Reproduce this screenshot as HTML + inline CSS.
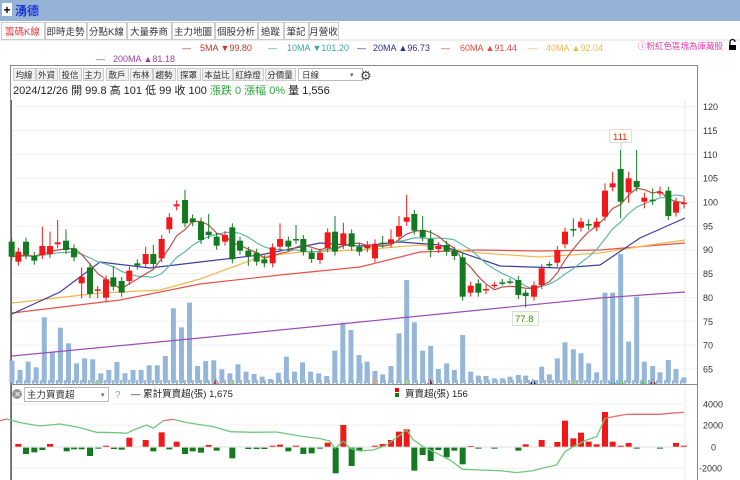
<!DOCTYPE html>
<html><head><meta charset="utf-8">
<style>
html,body{margin:0;padding:0;width:740px;height:480px;overflow:hidden;background:#fff;}
svg{display:block;font-family:"Liberation Sans","Noto Sans CJK TC",sans-serif;}
</style></head><body>
<svg id="s" width="740" height="480" viewBox="0 0 740 480" xmlns="http://www.w3.org/2000/svg">
<rect x="0" y="0" width="740" height="21" fill="#95b3d7"/>
<rect x="2" y="3" width="10" height="13" fill="#fff"/>
<text x="3.5" y="14" font-size="12" font-weight="bold" fill="#000">+</text>
<text x="15" y="15" font-size="12" font-weight="bold" fill="#1a35d8">湧德</text>
<line x1="0" y1="40" x2="740" y2="40" stroke="#ddd"/>
<g id="tabs" font-size="9.5"></g>
<g font-size="9">
<text x="182" y="51" fill="#b9373a">—</text><text x="200" y="51" fill="#c0392b">5MA ▼99.80</text>
<text x="268" y="51" fill="#3aa79a">—</text><text x="287" y="51" fill="#3aa79a">10MA ▼101.20</text>
<text x="357" y="51" fill="#2b2f8a">—</text><text x="373" y="51" fill="#2b2f8a">20MA ▲96.73</text>
<text x="441" y="51" fill="#e0483e">—</text><text x="460" y="51" fill="#e0483e">60MA ▲91.44</text>
<text x="528" y="51" fill="#f0b848">—</text><text x="546" y="51" fill="#f0b848">40MA ▲92.04</text>
<text x="96" y="62" fill="#9b3fa8">—</text><text x="113" y="62" fill="#9b3fa8">200MA ▲81.18</text>
<text x="638" y="49" fill="#e040b0" font-size="8.5">ⓘ粉紅色區塊為庫藏股</text>
</g>
<rect x="729" y="45" width="7" height="5" fill="#000"/><path d="M730 45 v-3 a2.5 2.5 0 0 1 5 0" fill="none" stroke="#000" stroke-width="1.2"/>
<rect x="10.5" y="65.5" width="687" height="420" fill="none" stroke="#888"/>
<line x1="11.5" y1="100" x2="11.5" y2="480" stroke="#666"/>
<line x1="685" y1="100" x2="685" y2="480" stroke="#e8e8e8"/>
<line x1="697.5" y1="100" x2="697.5" y2="480" stroke="#888"/>
<g id="tb" font-size="8.5"></g>
<text x="13" y="94" font-size="11" fill="#222">2024/12/26 開 99.8 高 101 低 99 收 100 <tspan fill="#2aa83a">漲跌 0 漲幅 0%</tspan> 量 1,556</text>
<g id="grid"></g>
<g id="chart"></g>
<rect x="12" y="380" width="673" height="4" fill="url(#st)"/>
<defs><pattern id="st" width="4" height="4" patternUnits="userSpaceOnUse"><rect width="2" height="4" fill="#9dbbdc"/></pattern></defs>
<line x1="11" y1="384.5" x2="697" y2="384.5" stroke="#888"/>
<circle cx="17" cy="394" r="5" fill="#999"/><text x="14.2" y="397" font-size="8" fill="#fff">✕</text>
<rect x="24.5" y="387.5" width="84" height="14" fill="#fff" stroke="#bbb"/>
<text x="27" y="398" font-size="9.5" fill="#333">主力買賣超</text><text x="101" y="397" font-size="7" fill="#666">▾</text>
<text x="115" y="398" font-size="10" fill="#7aa7d0">?</text>
<text x="131" y="397" font-size="9.5" fill="#222">— 累計買賣超(張) 1,675</text>
<rect x="395" y="388" width="4" height="4" fill="#e00"/><rect x="395" y="393" width="4" height="4" fill="#080"/>
<text x="405" y="397" font-size="9.5" fill="#222">買賣超(張) 156</text>
<g id="low"></g>
<g font-size="9" fill="#333" id="lab"></g>
</svg>
<script>
var NS="http://www.w3.org/2000/svg";
function el(p,t,a,txt){var e=document.createElementNS(NS,t);for(var k in a)e.setAttribute(k,a[k]);if(txt!=null)e.textContent=txt;document.getElementById(p).appendChild(e);return e;}
var tabs=[["籌碼K線",1,44],["即時走勢",45,86],["分點K線",87,126],["大量券商",127,171],["主力地圖",172,214],["個股分析",215,257],["追蹤",258,283],["筆記",284,308],["月營收",309,338]];
tabs.forEach(function(t,i){el("tabs","rect",{x:t[1]+.5,y:22.5,width:t[2]-t[1],height:17,fill:"#fff",stroke:"#ccc"});var w=t[2]-t[1];var tw=t[0].length*9.5-(t[0].indexOf("K")>=0?3:0);el("tabs","text",{x:t[1]+(w-tw)/2,y:35,fill:i==0?"#e0393e":"#333"},t[0]);});
var tb=[["均線",13,35],["外資",36,57],["投信",59,81],["主力",83,103],["散戶",106,128],["布林",130,152],["趨勢",153,175],["探罩",177,200],["本益比",202,232],["紅綠燈",233,263],["分價量",265,295]];
tb.forEach(function(t){el("tb","rect",{x:t[1]+.5,y:68.5,width:t[2]-t[1],height:12,fill:"#f0f0f0",stroke:"#ccc"});var w=t[2]-t[1];el("tb","text",{x:t[1]+(w-t[0].length*8.5)/2,y:78,fill:"#333"},t[0]);});
el("tb","rect",{x:298.5,y:68.5,width:64,height:12,fill:"#fff",stroke:"#bbb"});el("tb","text",{x:302,y:78,fill:"#333"},"日線");el("tb","text",{x:350,y:77,fill:"#666","font-size":7},"▾");
el("tb","text",{x:360,y:80,fill:"#444","font-size":13},"⚙");
function Y(p){return 202-(p-100)*4.77;}
[120,115,110,105,100,95,90,85,80,75,70,65].forEach(function(p){var y=Y(p);el("grid","line",{x1:12,x2:697,y1:y,y2:y,stroke:"#f0f0f0"});el("lab","text",{x:703,y:y+3.5},String(p));});
[["4000",404],["2000",425],["0",447],["-2000",468]].forEach(function(a){el("lab","text",{x:a[0]=="0"?711:(a[0][0]=="-"?699:703),y:a[1]+3.5},a[0]);el("grid","line",{x1:12,x2:685,y1:a[1],y2:a[1],stroke:a[0]=="0"?"#ddd":"#f2f2f2"});});
var vl=[542,570,545,562,412,515,443,490,550,535,538,580,570,546,580,570,570,556,556,528,385,442,368,558,543,541,568,580,553,575,582,590,597,578,530,575,547,575,580,588,512,428,450,525,545];
vl.forEach(function(v,i){var x=12+i*8.07,y=180+v/3;el("chart","rect",{x:x-2.5,y:y,width:5,height:383-y,fill:"#95b6d8"});});
var vr=[[0,700],[22,717],[45,723],[68,733],[93,708],[117,610],[140,450],[163,577],[188,662],[212,648],[235,717],[260,700],[283,720],[308,615],[332,725],[355,737],[378,738],[403,745],[427,745],[450,740],[475,735],[497,737],[522,750],[545,710],[568,733],[592,685],[615,637],[640,658],[663,670],[686,700],[710,727],[735,488],[758,488],[782,372],[806,635],[830,500],[853,695],[878,708],[900,727],[925,690],[948,717],[972,742]];
vr.forEach(function(v){var x=360+v[0]/3,y=130+v[1]/3;el("chart","rect",{x:x-2.5,y:y,width:5,height:383-y,fill:"#95b6d8"});});
function pl(pts,c){el("chart","polyline",{points:pts.map(function(p){return p.join(",")}).join(" "),fill:"none",stroke:c,"stroke-width":1.2});}
pl([[12,356],[200,338],[360,322],[480,310],[600,298],[685,292]],"#9b4fb8");
pl([[12,313],[120,300],[200,284],[280,275],[360,267],[420,252],[480,250],[540,251],[600,250],[660,245],[685,243]],"#e8514a");
pl([[12,303],[100,293],[160,290],[200,279],[260,257],[300,252],[360,250],[420,245],[480,253],[540,257],[600,253],[650,245],[685,240]],"#f2b84f");
pl([[12,314],[60,292],[100,262],[150,268],[200,262],[260,255],[320,243],[360,246],[400,242],[440,245],[500,266],[560,268],[600,265],[640,238],[685,218]],"#3b3fa0");
var c4=[[35,185,230,"g"],[55,215,245,"r"],[78,185,225,"g"],[103,228,242,"g"],[127,198,225,"r",140],[150,198,222,"r",155],[173,187,193,"r",120],[198,182,210,"g",148],[222,205,232,"g"],[245,290,310,"r",262,355],[270,262,342,"g"],[293,328,332,"r",318,355],[318,298,353,"r"],[340,292,320,"g",258],[365,303,338,"g"],[388,272,303,"r"],[412,250,257,"g"],[437,222,252,"r",200],[460,222,252,"g",195],[485,177,235,"r"],[508,112,148,"r"],[530,73,79,"r"],[555,60,130,"g",30],[578,115,127,"g"],[603,125,180,"g"],[626,155,165,"g",102],[650,170,197,"g"],[675,165,185,"r"],[697,142,238,"g"],[720,182,212,"g"],[745,212,228,"g",200,258],[770,218,245,"g"],[793,238,250,"g"],[818,202,250,"r"],[840,177,200,"r",130],[865,182,200,"g"],[888,177,180,"g",135],[910,177,215,"g"],[935,218,237,"g"],[960,218,240,"r"],[983,157,205,"r"],[1005,155,215,"g",108],[1030,160,195,"r",128],[1055,160,200,"g"],[1078,200,215,"g"]];
var c5=[[22,345,355,"r"],[45,342,385,"r",328],[68,338,341,"g",318],[93,328,340,"r",298],[117,288,320,"r",258],[140,262,275,"r",195],[163,252,302,"g",240],[188,300,322,"g",258],[212,327,360,"g",300,382],[235,348,357,"r"],[260,345,365,"g"],[283,362,378,"g"],[308,382,500,"g"],[332,467,488,"r"],[355,460,488,"g"],[378,477,480,"r",465,492],[403,464,467,"r",455,475],[427,457,460,"g",447,467],[450,454,457,"g",445,463],[475,450,495,"g"],[497,488,498,"g",478,532],[522,466,500,"r"],[545,415,465,"r"],[568,402,405,"g",395,412],[592,360,398,"r"],[615,305,343,"r"],[640,297,300,"g",265,320],[663,275,293,"r"],[686,282,285,"g",268,300],[710,275,292,"r"],[735,182,260,"r",160],[758,160,172,"r",125],[782,117,215,"g",60,265],[806,145,187,"r",125,218],[830,153,172,"g",60],[853,203,215,"r",188,235],[878,209,212,"g",175,225],[900,186,189,"r",170,200],[925,182,258,"g"],[948,215,248,"r"],[972,218,221,"r",200,235]];
var C=[];
c4.forEach(function(c){C.push({x:c[0]/3,t:180+c[1]/3,b:180+c[2]/3,col:c[3],h:c[4]!=null?180+c[4]/3:null,l:c[5]!=null?180+c[5]/3:null});});
c5.forEach(function(c){C.push({x:360+c[0]/3,t:130+c[1]/3,b:130+c[2]/3,col:c[3],h:c[4]!=null?130+c[4]/3:null,l:c[5]!=null?130+c[5]/3:null});});
var closes=C.map(function(c){return c.col=="r"?c.t:c.b;});
function ma(n){var out=[];for(var i=0;i<closes.length;i++){var s=0;for(var j=0;j<n;j++){s+=closes[Math.max(0,i-j)];}out.push([C[i].x,s/n]);}return out;}
pl(ma(10),"#5fb7ab");pl(ma(5),"#b9524a");
C.forEach(function(c){var col=c.col=="r"?"#f01818":"#137a1f";var h=c.h!=null?c.h:c.t-4,l=c.l!=null?c.l:c.b+4;
el("chart","line",{x1:c.x,x2:c.x,y1:h,y2:l,stroke:col,"stroke-width":1});
el("chart","rect",{x:c.x-3,y:c.t,width:6,height:Math.max(1.5,c.b-c.t),fill:col});});
[[97,"#b6e05a"],[216,"#e03030"],[232,"#b6e05a"],[375,"#f0a040"],[407,"#b6e05a"],[430,"#a02030"],[533,"#1a2f8a"],[573,"#b6e05a"],[613,"#3aa0a0"],[621,"#3adc3a"],[644,"#3adc3a"],[653,"#a02030"]].forEach(function(m){el("chart","path",{d:"M"+(m[0]-3)+" 384 l3 -5 l3 5z",fill:m[1]});});
el("chart","rect",{x:609.5,y:129.5,width:22,height:13,fill:"#fffdf0",stroke:"#ddd"});el("chart","text",{x:613,y:140,"font-size":9.5,fill:"#d03030"},"111");
el("chart","line",{x1:621,x2:621,y1:143,y2:150,stroke:"#ccc"});
el("chart","rect",{x:512.5,y:311.5,width:26,height:14,fill:"#fbfff0",stroke:"#ddd"});el("chart","text",{x:515,y:322,"font-size":9.5,fill:"#3a8a3a"},"77.8");
var lb=[[55,192,200],[78,203,222],[103,203,217],[127,203,210],[150,192,200],[200,203,214],[222,203,208],[245,203,208],[270,203,228],[295,203,206],[318,197,200],[342,203,207],[365,203,209],[388,173,200],[437,180,200],[460,203,214],[485,157,200],[508,203,208],[530,185,200],[555,203,222],[578,203,214],[603,203,218],[626,195,200],[650,203,212],[697,203,235],[745,203,207],[770,203,207],[793,203,207],[818,197,200],[840,194,200],[865,203,214],[888,197,200],[910,203,222],[935,203,220],[960,203,206],[983,188,200],[1007,203,280],[1030,135,200],[1055,203,258],[1078,203,212]];
lb.forEach(function(b){var x=b[0]/3;el("low","rect",{x:x-3,y:380+b[1]/3,width:6,height:(b[2]-b[1])/3,fill:b[1]<201?"#f01818":"#137a1f"});});
var lb2=[[45,197,200],[68,192,200],[93,180,200],[117,155,200],[140,148,200],[163,203,272],[188,203,225],[212,203,243],[235,203,210],[260,203,232],[283,203,212],[308,203,253],[332,198,200],[355,203,206],[403,203,206],[475,203,212],[497,193,200],[545,180,200],[592,186,200],[615,122,200],[640,175,200],[663,158,200],[686,185,200],[710,193,200],[735,96,200],[758,185,200],[782,197,200],[806,189,200],[830,203,206],[900,203,206],[948,189,200],[972,197,200]];
lb2.forEach(function(b){var x=360+b[0]/3;el("low","rect",{x:x-3,y:380+b[1]/3,width:6,height:(b[2]-b[1])/3,fill:b[1]<201?"#f01818":"#137a1f"});});
var L1=[[0,122],[20,117],[60,128],[120,138],[180,132],[240,143],[290,157],[350,158],[380,160],[400,150],[440,135],[460,145],[490,122],[520,118],[560,128],[640,140],[690,155],[760,157],[830,156],[900,168],[960,176],[990,183],[1005,205],[1030,183],[1050,205],[1080,213]].map(function(p){return [p[0]/3,380+p[1]/3];});
var L2=[[0,213],[40,210],[80,195],[120,165],[140,150],[160,180],[190,200],[230,220],[270,240],[308,268],[360,270],[420,272],[470,278],[520,272],[545,265],[590,255],[615,215],[640,200],[680,180],[710,170],[735,115],[760,110],[800,103],[900,103],[930,100],[972,97]].map(function(p){return [360+p[0]/3,380+p[1]/3];});
var L=L1.concat(L2);
for(var i=1;i<L.length;i++){var a=L[i-1],b=L[i];var red=(a[1]<422&&b[1]<422)||(a[1]<415);el("low","line",{x1:a[0],y1:a[1],x2:b[0],y2:b[1],stroke:red?"#ec6a6a":"#6fc87a","stroke-width":1.3});}
</script>
</body></html>
